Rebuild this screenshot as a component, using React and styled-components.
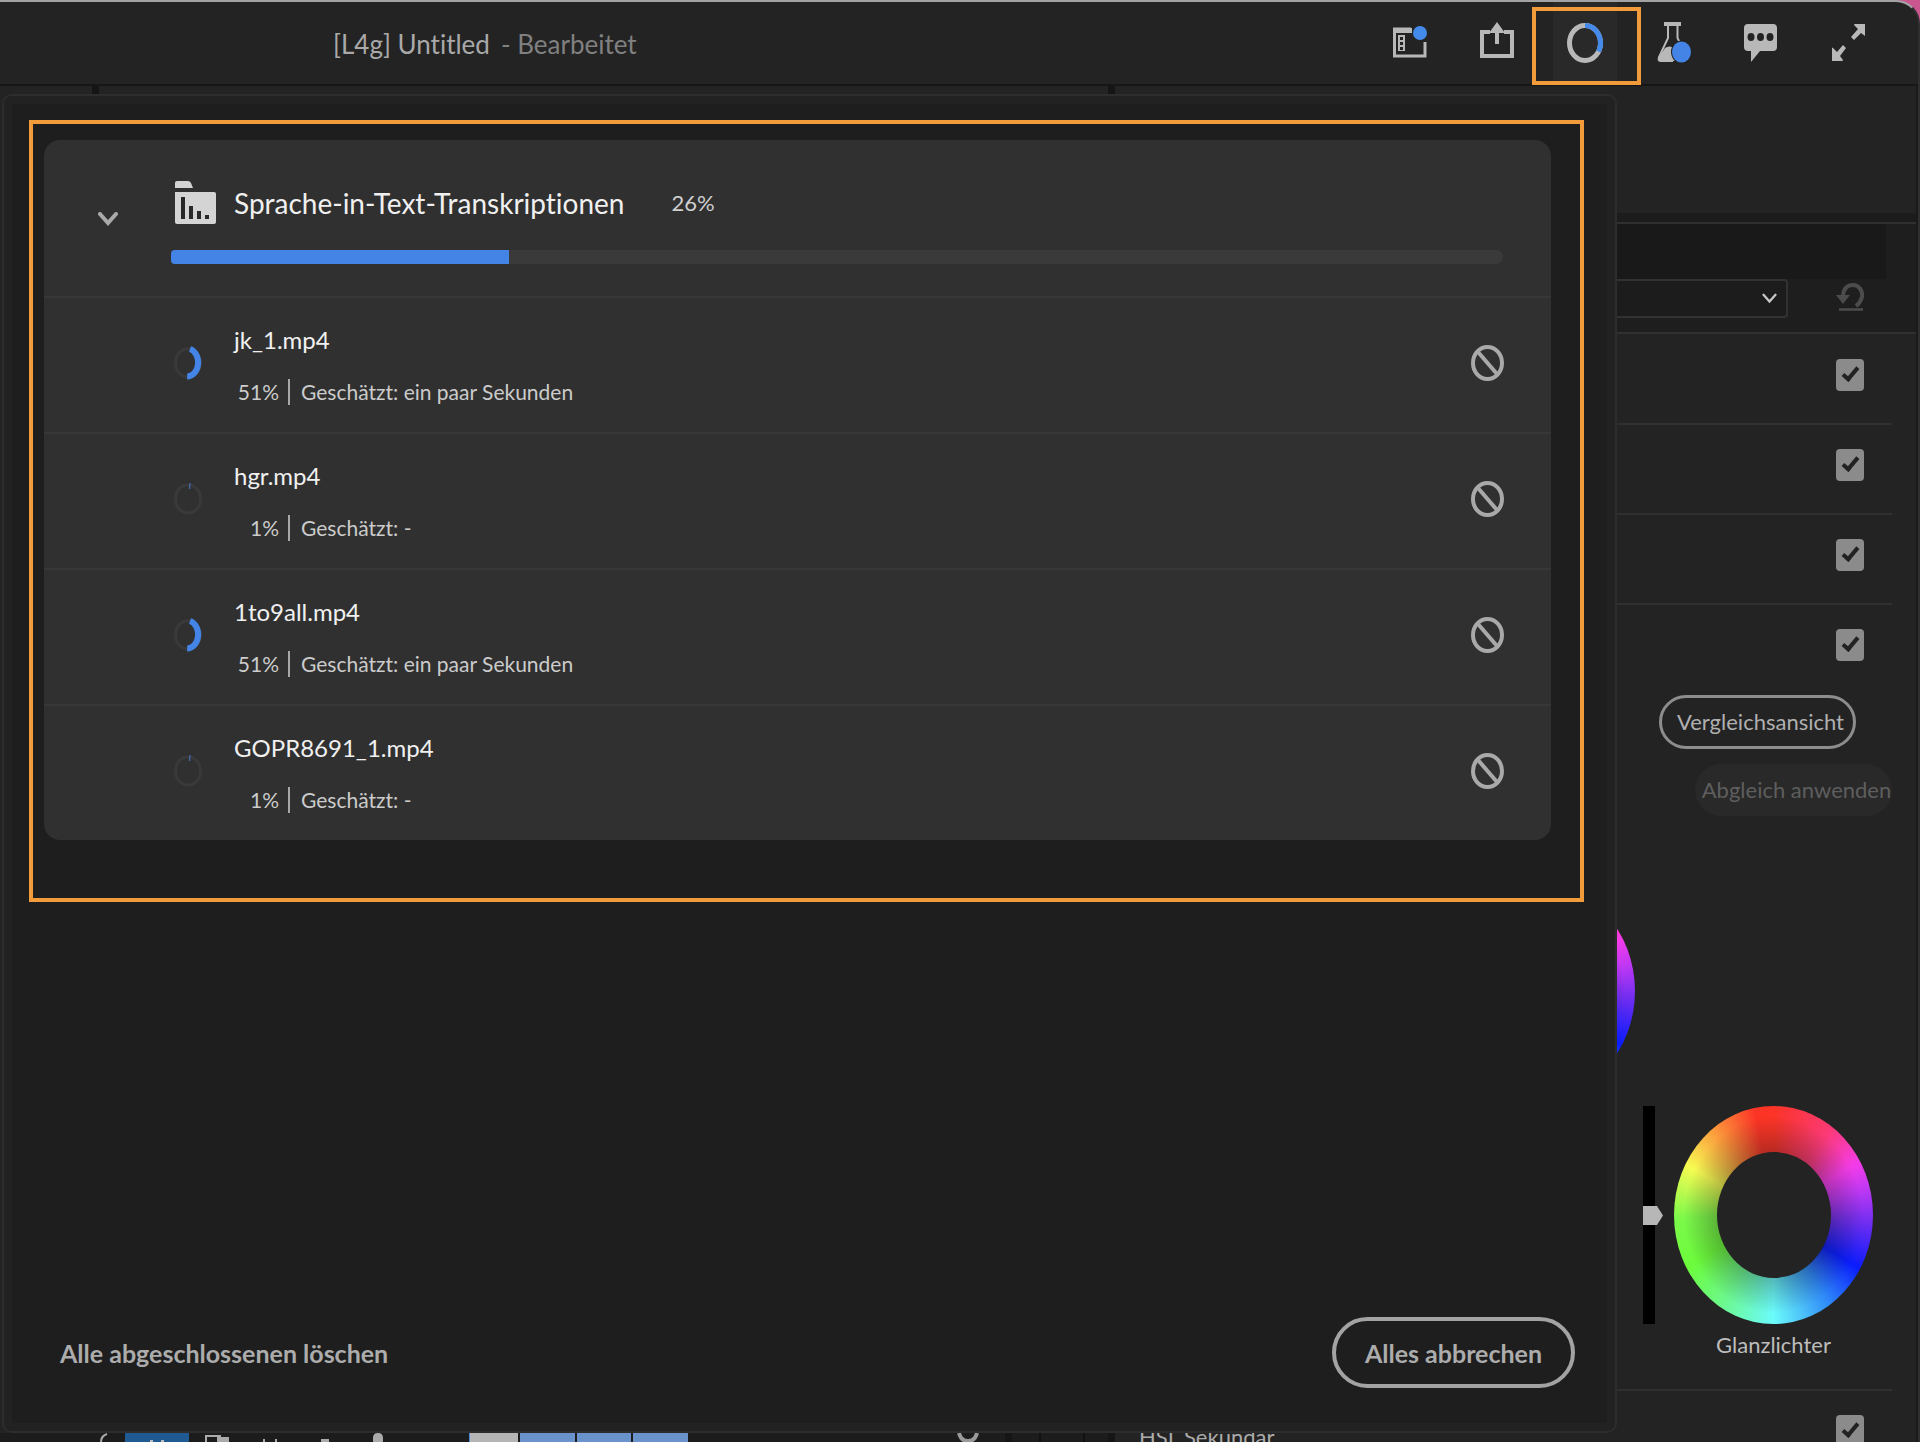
import React from "react";
import styled, { createGlobalStyle } from "styled-components";

const ui = '"Lato", "Noto Sans", sans-serif';
const orange = "#f29b3a";
const blue = "#4384e6";

const GlobalStyle = createGlobalStyle`
  *, *::before, *::after { box-sizing: border-box; }
  body { margin: 0; background: #c9568f; font-family: ${ui}; font-variant-ligatures: none; }
  button, input, select { font: inherit; margin: 0; }
`;

const AppFrame = styled.div`
  position: relative;
  display: flex;
  flex-direction: column;
  height: 100vh;
  overflow: hidden;
  background: #232323;
  border-top: 2px solid #a3a3a3;
  border-right: 2px solid #2f2f2f;
  border-top-right-radius: 24px;
`;

const Header = styled.header`
  display: flex;
  flex: none;
  align-items: stretch;
  justify-content: space-between;
  height: 84px;
  padding: 0 37px 0 333px;
  border-bottom: 2px solid #161616;
`;

const Title = styled.h1`
  display: flex;
  align-items: center;
  gap: 11px;
  margin: 0;
  padding-top: 2px;
  font-size: 26px;
  font-weight: 400;
  line-height: 32px;
  color: #a9a9a9;
`;

const Status = styled.span`
  color: #808080;
`;

const Toolbar = styled.nav`
  display: flex;
  gap: 24px;
`;

const ToolButton = styled.button`
  position: relative;
  display: flex;
  align-items: center;
  justify-content: center;
  width: 64px;
  padding: 0;
  border: 0;
  background: ${(p) => (p.$active ? "#292929" : "none")};
  svg { display: block; overflow: visible; }
`;

const Highlight = styled.span`
  position: absolute;
  z-index: 3;
  inset: 5px -24px -1px -21px;
  border: 4px solid ${orange};
`;

const Workspace = styled.main`
  display: flex;
  flex: 1;
  min-height: 0;
`;

const Timeline = styled.section`
  display: flex;
  flex: 1;
  flex-direction: column;
  justify-content: space-between;
  min-width: 0;
  border-right: 7px solid #151515;
`;

const TimelineTop = styled.div`
  width: 99px;
  height: 10px;
  border-right: 7px solid #151515;
`;

const Tracks = styled.div`
  display: flex;
  height: 9px;
  overflow: hidden;
  background: #1c1c1c;
  svg { flex: none; }
`;

const Clips = styled.div`
  display: flex;
  gap: 2px;
  width: 218px;
`;

const Clip = styled.span`
  flex: ${(p) => p.$span};
  background: ${(p) => p.$color};
`;

const TrackRest = styled.div`
  display: flex;
  flex: 1;
  justify-content: flex-end;
`;

const Inspector = styled.aside`
  display: flex;
  flex: none;
  flex-direction: column;
  width: 803px;
  border-right: 2px solid #1a1a1a;
  > * { flex: none; }
`;

const InspectorTabs = styled.div`
  height: 138px;
  border-bottom: 2px solid #303030;
  background: linear-gradient(#232323 127px, #1c1c1c 127px);
`;

const Preset = styled.div`
  padding: 0 52px 14px 0;
  border-bottom: 2px solid #303030;
  background: #1e1e1e;
`;

const PresetBand = styled.div`
  height: 55px;
  margin-right: -22px;
  background: #191919;
`;

const PresetRow = styled.div`
  display: flex;
  align-items: center;
  justify-content: space-between;
  gap: 48px;
  padding-left: 24px;
`;

const SelectWrap = styled.div`
  display: flex;
  flex: 1;
  align-items: center;
  svg { flex: none; margin-left: -26px; pointer-events: none; }
`;

const Select = styled.select`
  width: 100%;
  height: 39px;
  border: 2px solid #323232;
  border-radius: 4px;
  appearance: none;
  background: #1c1c1c;
  color: #a8a8a8;
`;

const PlainButton = styled.button`
  display: flex;
  padding: 0;
  border: 0;
  background: none;
`;

const Groups = styled.div`
  padding-top: 1px;
`;

const Group = styled.label`
  display: flex;
  align-items: center;
  justify-content: space-between;
  height: 90px;
  margin-right: 24px;
  padding: 0 28px 8px 24px;
  border-bottom: 2px solid ${(p) => (p.$last ? "transparent" : "#303030")};
`;

const GroupName = styled.span`
  padding-top: 12px;
  font-size: 22px;
  line-height: 28px;
  color: #ababab;
`;

const CheckBox = styled.input`
  width: 28px;
  height: 32px;
  margin-left: auto;
  appearance: none;
  border-radius: 4px;
  background: #8b8b8b;
  display: grid;
  place-items: center;
  &::after {
    content: "";
    width: 9px;
    height: 17px;
    margin-bottom: 5px;
    border: solid #222;
    border-width: 0 4px 4px 0;
    transform: rotate(40deg);
  }
`;

const Match = styled.div`
  display: flex;
  flex-direction: column;
  align-items: flex-end;
  gap: 15px;
  padding-right: 24px;
`;

const MatchButton = styled.button`
  width: 197px;
  height: ${(p) => (p.disabled ? "52px" : "54px")};
  padding: 0 0 0 6px;
  border: ${(p) => (p.disabled ? "0" : "3px solid #8d8d8d")};
  border-radius: 27px;
  margin-right: ${(p) => (p.disabled ? "0" : "36px")};
  background: ${(p) => (p.disabled ? "#292929" : "transparent")};
  color: ${(p) => (p.disabled ? "#5e5e5e" : "#b0b0b0")};
  font-size: 22px;
  line-height: 28px;
  white-space: nowrap;
`;

const Wheels = styled.div`
  display: flex;
  flex-direction: column;
  align-items: flex-end;
  gap: 6px;
  padding: 66px 43px 0 0;
`;

const WheelBlock = styled.figure`
  display: flex;
  gap: 11px;
  height: 218px;
  margin: 0 ${(p) => p.$shift}px 0 0;
`;

const Wheel = styled.div`
  display: grid;
  place-items: center;
  width: 199px;
  border-radius: 50%;
  background:
    radial-gradient(closest-side, rgba(20, 20, 20, 0.3) 56%, rgba(20, 20, 20, 0) 90%),
    conic-gradient(#fb3426, #fb3a78 34deg, #f43ce8 58deg, #c038f4 74deg, #7a2ff0 92deg, #0a1cfb 122deg, #2f8af8 148deg, #6bfbfb 180deg, #6cf88c 210deg, #6cfb3c 238deg, #7cf94a 268deg, #f6fb52 300deg, #fb9a3c 325deg, #fb3426 350deg);
  &::after {
    content: "";
    width: 114px;
    height: 126px;
    border-radius: 50%;
    background: #232323;
  }
`;

const Luma = styled.div`
  display: flex;
  align-items: center;
  width: 20px;
  background: linear-gradient(90deg, #000 12px, transparent 12px);
`;

const WheelName = styled.div`
  width: 199px;
  padding-top: 1px;
  margin-bottom: 30px;
  text-align: center;
  font-size: 22px;
  line-height: 28px;
  color: #bdbdbd;
`;

const Rule = styled.hr`
  width: 100%;
  height: 2px;
  margin: 0;
  border: 0;
  border-right: 24px solid #232323;
  background: #303030;
`;

const Dialog = styled.section`
  position: absolute;
  z-index: 2;
  top: 92px;
  right: 301px;
  bottom: 9px;
  left: 2px;
  display: flex;
  flex-direction: column;
  justify-content: space-between;
  padding: 24px 31px 43px 25px;
  border: 2px solid #2d2d2d;
  border-radius: 10px;
  background: #1e1e1e;
  box-shadow: inset 0 0 0 8px #222;
`;

const Marked = styled.div`
  padding: 16px 29px 58px 11px;
  border: 4px solid ${orange};
`;

const Card = styled.div`
  overflow: hidden;
  border-radius: 16px;
  background: #303030;
`;

const CardHeader = styled.div`
  display: flex;
  gap: 53px;
  height: 156px;
  padding: 38px 48px 0 54px;
`;

const Toggle = styled(PlainButton)`
  align-self: flex-start;
  margin-top: 34px;
`;

const Summary = styled.div`
  flex: 1;
`;

const SummaryLine = styled.div`
  display: flex;
  align-items: center;
  height: 48px;
  padding-left: 4px;
`;

const SummaryTitle = styled.h2`
  margin: 0 47px 0 18px;
  padding-top: 2px;
  font-size: 28px;
  line-height: 40px;
  font-weight: 400;
  color: #f0f0f0;
`;

const Percent = styled.span`
  padding-top: 2px;
  font-size: 22px;
  line-height: 32px;
  color: #cfcfcf;
`;

const Track = styled.div`
  height: 14px;
  margin-top: 24px;
  overflow: hidden;
  border-radius: 4px 7px 7px 4px;
  background: #3a3a3a;
`;

const Fill = styled.div`
  height: 100%;
  background: ${blue};
`;

const Jobs = styled.ul`
  margin: 0;
  padding: 0;
  list-style: none;
`;

const Job = styled.li`
  display: flex;
  align-items: center;
  height: 136px;
  padding: 0 47px 4px 130px;
  border-top: 2px solid #373737;
`;

const JobText = styled.div`
  flex: 1;
  padding: 6px 0 0 30px;
`;

const JobName = styled.div`
  font-size: 24px;
  line-height: 36px;
  color: #f0f0f0;
`;

const JobInfo = styled.div`
  display: flex;
  align-items: center;
  margin-top: 16px;
  font-size: 21px;
  line-height: 36px;
  color: #cbcbcb;
`;

const JobPercent = styled.span`
  width: 45px;
  text-align: right;
`;

const Bar = styled.span`
  width: 2px;
  height: 26px;
  margin: 0 11px 0 9px;
  background: #a8a8a8;
`;

const Footer = styled.footer`
  display: flex;
  align-items: center;
  justify-content: space-between;
  padding: 0 9px 0 31px;
`;

const TextButton = styled.button`
  padding: 0;
  border: 0;
  background: none;
  color: #acacac;
  font-size: 25px;
  line-height: 36px;
  font-weight: 700;
`;

const OutlineButton = styled(TextButton)`
  width: 243px;
  height: 71px;
  border: 4px solid #a3a3a3;
  border-radius: 36px;
`;

const PanelIcon = () => (
  <svg width="32" height="32" viewBox="0 0 32 32" fill="none">
    <path d="M18 2H1.500V29H32V15" stroke="#b8b8b8" strokeWidth="3" />
    <path d="M1 1h18v5H1z" fill="#b8b8b8" />
    <path d="M5 8h7v16H5z" fill="#b8b8b8" />
    <path d="M7 10h3v3H7zM7 15h3v3H7zM7 20h3v3H7z" fill="#232323" />
    <circle cx="27" cy="6" r="7" fill="#448aea" />
  </svg>
);

const ShareIcon = () => (
  <svg width="34" height="42" viewBox="0 0 34 42" fill="none">
    <path d="M10 10H2V34H32V10H24" stroke="#b8b8b8" strokeWidth="4" />
    <path d="M17 0L25 11H19V22H15V11H9Z" fill="#b8b8b8" />
  </svg>
);

const ProgressIcon = () => (
  <svg width="36" height="40" viewBox="0 0 36 40" fill="none">
    <ellipse cx="18" cy="20" rx="15.500" ry="17.500" stroke="#b8b8b8" strokeWidth="5" />
    <path d="M18 2.500A15.500 17.500 0 0 1 31.500 28.500" stroke="#448aea" strokeWidth="5" />
  </svg>
);

const FlaskIcon = () => (
  <svg width="32" height="44" viewBox="0 0 32 44" fill="none">
    <path d="M7 1h17v4H7z" fill="#b8b8b8" />
    <path d="M11 4V17L2 36C1 39 2 40 4 40H16" stroke="#b8b8b8" strokeWidth="2" />
    <path d="M20.500 4V17L23 22" stroke="#b8b8b8" strokeWidth="2" />
    <path d="M8 27Q12 24 18 27L17 33L20 40H3Q0 39 2 36Z" fill="#b8b8b8" />
    <ellipse cx="24.500" cy="31" rx="10.500" ry="11.500" fill="#232323" />
    <ellipse cx="24.500" cy="31" rx="9.500" ry="10.500" fill="#4384e6" />
  </svg>
);

const ChatIcon = () => (
  <svg width="35" height="38" viewBox="0 0 35 38">
    <path d="M4 0H29Q33 0 33 4V23Q33 27 29 27H16L7 38V27H4Q0 27 0 23V4Q0 0 4 0Z" fill="#b8b8b8" />
    <g fill="#232323"><ellipse cx="7" cy="13" rx="3.500" ry="4" /><ellipse cx="16.500" cy="13" rx="3.500" ry="4" /><ellipse cx="26" cy="13" rx="3.500" ry="4" /></g>
  </svg>
);

const ExpandIcon = () => (
  <svg width="35" height="39" viewBox="0 0 35 39">
    <path d="M33 0V12L29 9L22 16L19 13L26 5L22 1Q22 0 23 0ZM0 37V24Q0 23 1 24L5 28L11 21L14 24L8 32L11 36Q11 37 10 37Z" fill="#b8b8b8" />
  </svg>
);

const FolderIcon = () => (
  <svg width="41" height="43" viewBox="0 0 41 43">
    <path d="M0 2Q0 0 2 0H13Q15 0 16 2L18 7H0Z" fill="#d4d4d4" />
    <path d="M0 11H39Q41 11 41 13V41Q41 43 39 43H2Q0 43 0 41Z" fill="#d4d4d4" />
    <path d="M6 16h4v22H6zM14 25h4v13h-4zM22 30h4v8h-4zM30 34h4v4h-4z" fill="#282828" />
  </svg>
);

const Chevron = ({ color, width, height, stroke }) => (
  <svg width={width} height={height} viewBox="0 0 20 14" fill="none">
    <path d="M2 2L10 11L18 2" stroke={color} strokeWidth={stroke} strokeLinecap="round" />
  </svg>
);

const ResetIcon = () => (
  <svg width="28" height="31" viewBox="0 0 28 31" fill="none">
    <path d="M7 12C8 5 12 2 17 2C23 2 27 8 26 14C25 18 24 20 20 23" stroke="#4c4c4c" strokeWidth="4" />
    <path d="M0 12H14L7 21Z" fill="#4c4c4c" />
    <path d="M3 26.500H27" stroke="#4c4c4c" strokeWidth="2.500" />
  </svg>
);

const CancelIcon = () => (
  <svg width="33" height="36" viewBox="0 0 33 36" fill="none" stroke="#a9a9a9" strokeWidth="4">
    <ellipse cx="16.500" cy="18" rx="14.500" ry="16" />
    <path d="M7 7L26 29" />
  </svg>
);

const Spinner = ({ value }) => {
  const a = (value / 100) * 2 * Math.PI + 0.2;
  const x = 16 + 11 * Math.sin(a);
  const y = 17 - 14 * Math.cos(a);
  const done = value > 10;
  return (
    <svg width="30" height="34" viewBox="0 0 30 34" fill="none">
      <ellipse cx="14" cy="17" rx="12.500" ry="14" stroke="#3a3a3a" strokeWidth="3" />
      {done ? (
        <path d={`M16 3A11 14 0 0 1 ${x} ${y}`} stroke={blue} strokeWidth="6" />
      ) : (
        <path d="M16 1L15.500 7" stroke="#41659c" strokeWidth="1.500" />
      )}
    </svg>
  );
};

const LumaThumb = () => (
  <svg width="20" height="19" viewBox="0 0 20 19"><path d="M0 0H14L20 9.500L14 19H0Z" fill="#b7b7b7" /></svg>
);

const TrackHeadIcons = () => (
  <svg width="470" height="9" viewBox="0 0 470 9" fill="none">
    <path d="M107 1Q101 3 101 9" stroke="#aaa" strokeWidth="2" />
    <path d="M125 0h64v9h-64z" fill="#1f5a93" />
    <path d="M150 8h3M161 8h3" stroke="#bbb" strokeWidth="2" />
    <path d="M206 9V3H220V9" stroke="#aaa" strokeWidth="2" />
    <path d="M217 4h12v5h-12z" fill="#aaa" />
    <path d="M264 6v3M276 6v3" stroke="#aaa" strokeWidth="2" />
    <path d="M321 6h8v3h-8z" fill="#aaa" />
    <path d="M373 9V5Q373 0 378 0Q383 0 383 5V9Z" fill="#aaa" />
    <path d="M469 0h2v9h-2z" fill="#4a87dd" />
  </svg>
);

const TrackEnd = () => (
  <svg width="151" height="9" viewBox="0 0 151 9" fill="none">
    <path d="M2 0Q4 8 11 8Q18 8 20 0" stroke="#999" strokeWidth="4" />
    <path d="M48 0h7v9h-7z" fill="#151515" />
    <path d="M83 0v9M127 0v9" stroke="#111" strokeWidth="2" />
  </svg>
);

const jobs = [
  { name: "jk_1.mp4", value: 51, eta: "ein paar Sekunden" },
  { name: "hgr.mp4", value: 1, eta: "-" },
  { name: "1to9all.mp4", value: 51, eta: "ein paar Sekunden" },
  { name: "GOPR8691_1.mp4", value: 1, eta: "-" },
];

const groups = ["Einfache Korrektur", "Kreativ", "Kurven", "Farbräder und Farbabgleich"];

export default function App() {
  return (
    <>
      <GlobalStyle />
      <AppFrame>
        <Header>
          <Title>[L4g] Untitled <Status>- Bearbeitet</Status></Title>
          <Toolbar>
            <ToolButton aria-label="Arbeitsbereiche"><PanelIcon /></ToolButton>
            <ToolButton aria-label="Exportieren"><ShareIcon /></ToolButton>
            <ToolButton $active aria-label="Fortschritt"><ProgressIcon /><Highlight /></ToolButton>
            <ToolButton aria-label="Beta"><FlaskIcon /></ToolButton>
            <ToolButton aria-label="Feedback"><ChatIcon /></ToolButton>
            <ToolButton aria-label="Vollbild"><ExpandIcon /></ToolButton>
          </Toolbar>
        </Header>
        <Workspace>
          <Timeline>
            <TimelineTop />
            <Tracks>
              <TrackHeadIcons />
              <Clips>
                <Clip $span={7} $color="#b5b5b5" />
                <Clip $span={8} $color="#6a93cb" />
                <Clip $span={8} $color="#6a93cb" />
                <Clip $span={8} $color="#6a93cb" />
              </Clips>
              <TrackRest><TrackEnd /></TrackRest>
            </Tracks>
          </Timeline>
          <Inspector>
            <InspectorTabs />
            <Preset>
              <PresetBand />
              <PresetRow>
                <SelectWrap>
                  <Select aria-label="Vorgabe" />
                  <Chevron color="#c8c8c8" width={15} height={11} stroke={3} />
                </SelectWrap>
                <PlainButton aria-label="Zurücksetzen"><ResetIcon /></PlainButton>
              </PresetRow>
            </Preset>
            <Groups>
              {groups.map((g, i) => (
                <Group key={g} $last={i === groups.length - 1}>
                  <CheckBox type="checkbox" defaultChecked aria-label={g} />
                </Group>
              ))}
            </Groups>
            <Match>
              <MatchButton>Vergleichsansicht</MatchButton>
              <MatchButton disabled>Abgleich anwenden</MatchButton>
            </Match>
            <Wheels>
              <WheelBlock $shift={238}><Luma><LumaThumb /></Luma><Wheel /></WheelBlock>
              <WheelBlock $shift={0}><Luma><LumaThumb /></Luma><Wheel /></WheelBlock>
              <WheelName>Glanzlichter</WheelName>
            </Wheels>
            <Rule />
            <Group $last>
              <GroupName>HSL Sekundär</GroupName>
              <CheckBox type="checkbox" defaultChecked />
            </Group>
          </Inspector>
        </Workspace>
        <Dialog role="dialog" aria-label="Fortschritt">
          <Marked>
            <Card>
              <CardHeader>
                <Toggle aria-label="Einklappen"><Chevron color="#a9a9a9" width={20} height={14} stroke={4} /></Toggle>
                <Summary>
                  <SummaryLine>
                    <FolderIcon />
                    <SummaryTitle>Sprache-in-Text-Transkriptionen</SummaryTitle>
                    <Percent>26%</Percent>
                  </SummaryLine>
                  <Track><Fill style={{ width: "25.4%" }} /></Track>
                </Summary>
              </CardHeader>
              <Jobs>
                {jobs.map((j) => (
                  <Job key={j.name}>
                    <Spinner value={j.value} />
                    <JobText>
                      <JobName>{j.name}</JobName>
                      <JobInfo>
                        <JobPercent>{j.value}%</JobPercent>
                        <Bar />
                        <span>Geschätzt: {j.eta}</span>
                      </JobInfo>
                    </JobText>
                    <PlainButton aria-label={`${j.name} abbrechen`}><CancelIcon /></PlainButton>
                  </Job>
                ))}
              </Jobs>
            </Card>
          </Marked>
          <Footer>
            <TextButton>Alle abgeschlossenen löschen</TextButton>
            <OutlineButton>Alles abbrechen</OutlineButton>
          </Footer>
        </Dialog>
      </AppFrame>
    </>
  );
}
